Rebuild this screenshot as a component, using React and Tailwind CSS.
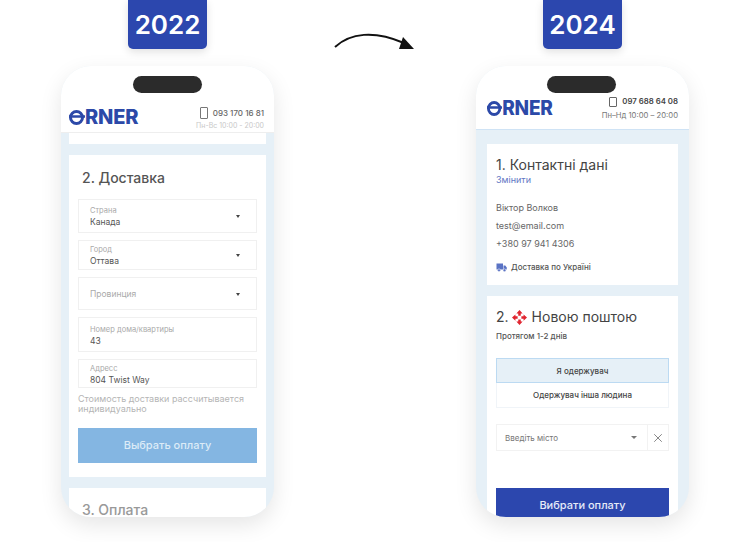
import React from 'react';
import { X } from 'lucide-react';

const font = { fontFamily: 'Inter, sans-serif' };

const Logo = () => (
  <div className="flex items-center text-[#2c49a8] font-extrabold">
    <svg width="16" height="15" viewBox="0 0 16 15" fill="none" stroke="#2c49a8">
      <circle cx="7.5" cy="7.5" r="6" strokeWidth="3" />
      <path d="M0 6.5h16" strokeWidth="2.4" />
    </svg>
    <span className="text-[20px] leading-[15px] tracking-[-0.2px]">RNER</span>
  </div>
);

const PhoneGlyph = ({ className }) => (
  <div className={`border rounded-[1px] ${className}`} />
);

const Badge = ({ year }) => (
  <div className="w-[79px] h-[49px] mx-auto flex items-center justify-center rounded-b-[5px] bg-[#2c47ae] text-white text-[26px] font-semibold shadow-[0_3px_8px_rgba(0,0,0,0.12)]">
    {year}
  </div>
);

const Device = ({ notch, children }) => (
  <div className="relative w-[213px] h-[451px] mt-[17px] rounded-[30px] overflow-hidden bg-[#e6f0f7] shadow-[0_8px_22px_rgba(0,0,0,0.1)] flex flex-col">
    <div className={`absolute top-[10px] w-[69px] h-[17px] rounded-full bg-[#2b2b2b] ${notch}`} />
    {children}
  </div>
);

const Field = ({ label, value, h, placeholder, select }) => (
  <div className={`relative border border-[#f0f0f0] px-[11px] pt-[1px] flex flex-col justify-center ${h}`}>
    {label && <div className="text-[7.5px] leading-[11px] text-[#a9a9a9]">{label}</div>}
    {value && <div className="text-[8.5px] leading-[12px] text-[#555]">{value}</div>}
    {placeholder && <div className="text-[8.5px] text-[#aaa]">{placeholder}</div>}
    {select && <div className="absolute right-[16px] top-1/2 -mt-[1px] border-x-[2px] border-t-[3px] border-x-transparent border-t-[#444]" />}
  </div>
);

const OldCheckout = () => (
  <Device notch="left-[72px]">
    <div className="h-[67px] shrink-0 bg-white border-b border-[#eee] pl-[8px] pr-[10px] flex items-end justify-between">
      <div className="mb-[7px]"><Logo /></div>
      <div className="flex flex-col items-end">
        <div className="flex items-center gap-[5px] text-[8px] font-medium text-[#666]">
          <PhoneGlyph className="w-[8px] h-[12px] border-[#777]" />
          093 170 16 81
        </div>
        <div className="text-[7px] leading-[13px] text-[#c8c8c8]">Пн-Вс 10:00 - 20:00</div>
      </div>
    </div>
    <div className="flex-1 px-[8px] flex flex-col gap-[11px] overflow-hidden">
      <div className="h-[11px] shrink-0 bg-white" />
      <div className="h-[322px] shrink-0 bg-white px-[9px] pt-[13px]">
        <div className="pl-[4px] text-[14px] leading-[20px] font-medium text-[#555]">2. Доставка</div>
        <div className="mt-[11px] flex flex-col gap-[7px]">
          <Field h="h-[34px]" label="Страна" value="Канада" select />
          <Field h="h-[30px]" label="Город" value="Оттава" select />
          <Field h="h-[33px]" placeholder="Провинция" select />
          <Field h="h-[35px]" label="Номер дома/квартиры" value="43" />
          <Field h="h-[29px]" label="Адресс" value="804 Twist Way" />
        </div>
        <div className="mt-[6px] text-[9px] leading-[10px] text-[#b5b5b5]">
          Стоимость доставки рассчитывается индивидуально
        </div>
        <div className="mt-[14px] h-[35px] bg-[#84b6e2] text-[#dcebf7] text-[11px] font-medium flex items-center justify-center">
          Выбрать оплату
        </div>
      </div>
      <div className="h-[29px] shrink-0 bg-white pl-[13px] pt-[12px] text-[14px] leading-[20px] font-medium text-[#999]">
        3. Оплата
      </div>
    </div>
  </Device>
);

const NovaPoshta = () => (
  <svg width="15" height="15" viewBox="0 0 24 24" fill="#e0242f" className="ml-[3px] mr-[5px]">
    <path d="M12 0l5 5.5h-3v3.5h-4V5.5H7z" />
    <path d="M12 24l5-5.5h-3V15h-4v3.5H7z" />
    <path d="M0 12l5.5-5v3H9v4H5.5v3z" />
    <path d="M24 12l-5.5-5v3H15v4h3.5v3z" />
  </svg>
);

const TruckIcon = () => (
  <svg width="11" height="9" viewBox="0 0 22 18" fill="#5a73c4">
    <path d="M1 1h13v12H1z" />
    <path d="M15 5h3.5l3 4v4H15z" />
    <circle cx="6" cy="14.5" r="2.8" stroke="#fff" strokeWidth="1" />
    <circle cx="17" cy="14.5" r="2.8" stroke="#fff" strokeWidth="1" />
  </svg>
);

const NewCheckout = () => (
  <Device notch="left-[71px]">
    <div className="h-[64px] shrink-0 bg-white border-b border-[#cfe3f5] pl-[11px] pr-[11px] flex items-start justify-between pt-[30px]">
      <div className="mt-[5px] scale-x-95 origin-left"><Logo /></div>
      <div className="flex flex-col items-end">
        <div className="flex items-center gap-[5px] text-[7.8px] leading-[11px] font-semibold text-[#444]">
          <PhoneGlyph className="w-[8px] h-[10px] border-[#666]" />
          097 688 64 08
        </div>
        <div className="mt-[3px] text-[7.7px] leading-[11px] text-[#777]">Пн–Нд 10:00 – 20:00</div>
      </div>
    </div>
    <div className="flex-1 px-[11px] pt-[14px] flex flex-col gap-[11px] overflow-hidden">
      <div className="h-[141px] shrink-0 bg-white px-[9px] pt-[12px]">
        <div className="text-[14px] leading-[18px] text-[#444]">1. Контактні дані</div>
        <div className="text-[9px] leading-[11px] text-[#6277c4]">Змінити</div>
        <div className="mt-[17px] flex flex-col gap-[7px] text-[9px] leading-[11px] text-[#666]">
          <div>Віктор Волков</div>
          <div>test@email.com</div>
          <div>+380 97 941 4306</div>
        </div>
        <div className="mt-[13px] flex items-center gap-[4px] text-[8px] leading-[11px] font-medium text-[#555]">
          <TruckIcon />
          Доставка по Україні
        </div>
      </div>
      <div className="flex-1 bg-white px-[9px] pt-[11px] flex flex-col">
        <div className="flex items-center text-[14px] leading-[20px] text-[#444]">
          2.<NovaPoshta />Новою поштою
        </div>
        <div className="mt-[4px] text-[8px] leading-[11px] font-medium text-[#555]">Протягом 1-2 днів</div>
        <div className="mt-[16px] h-[25px] bg-[#e6f0f7] border border-[#bcdaf2] text-[8px] font-medium text-[#444] flex items-center justify-center">
          Я одержувач
        </div>
        <div className="h-[25px] border border-t-0 border-[#f0f4f8] text-[8px] font-medium text-[#444] flex items-center justify-center">
          Одержувач інша людина
        </div>
        <div className="mt-[16px] h-[27px] flex border border-[#f2f2f2]">
          <div className="flex-1 pl-[8px] pr-[10px] flex items-center justify-between text-[8px] text-[#777]">
            Введіть місто
            <div className="border-x-[3px] border-t-[3px] border-x-transparent border-t-[#777]" />
          </div>
          <div className="w-[21px] border-l border-[#f2f2f2] flex items-center justify-center">
            <X size={14} strokeWidth={1.2} className="text-[#555]" />
          </div>
        </div>
        <div className="mt-[37px] h-[29px] shrink-0 pt-[5px] bg-[#2c47ae] text-[#e6ebf8] text-[11px] font-medium flex items-center justify-center">
          Вибрати оплату
        </div>
      </div>
    </div>
  </Device>
);

const App = () => (
  <div className="w-[750px] h-[542px] bg-white flex pl-[61px] overflow-hidden" style={font}>
    <div className="w-[213px]">
      <Badge year="2022" />
      <OldCheckout />
    </div>
    <div className="w-[202px] pt-[28px] pl-[60px]">
      <svg width="82" height="24" viewBox="0 0 82 24" fill="none">
        <path d="M1 19C16 5 40 2 70 15" stroke="#111" strokeWidth="2" />
        <path d="M69 9L80 21H65z" fill="#111" />
      </svg>
    </div>
    <div className="w-[213px]">
      <Badge year="2024" />
      <NewCheckout />
    </div>
  </div>
);

export default App;
